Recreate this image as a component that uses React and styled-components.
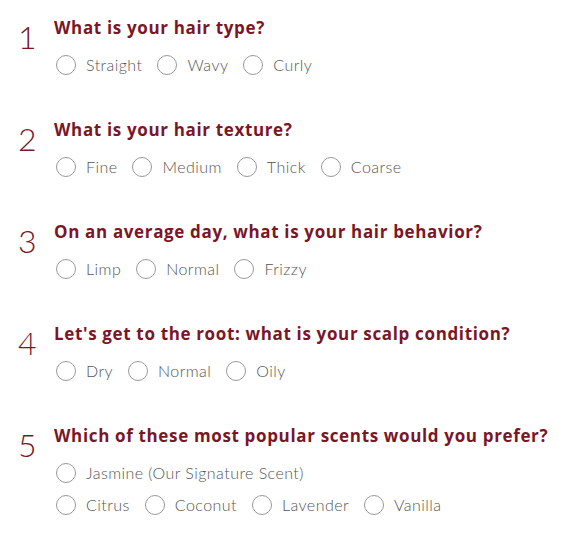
import React from 'react';
import styled, { createGlobalStyle } from 'styled-components';

const Global = createGlobalStyle`
  html, body {
    margin: 0;
    padding: 0;
    background: #fff;
  }
`;

const Page = styled.div`
  padding: 16px 0 0 0;
  display: flex;
  flex-direction: column;
  gap: 43px;
`;

const Question = styled.div`
  display: flex;
  align-items: flex-start;
`;

const Number = styled.div`
  width: 36px;
  padding-left: 18px;
  margin-top: 5px;
  font-family: Lato, sans-serif;
  font-weight: 300;
  font-size: 32px;
  line-height: 31px;
  color: #7b1626;
`;

const Body = styled.div`
  display: flex;
  flex-direction: column;
  gap: 12px;
`;

const Title = styled.div`
  font-family: "Open Sans", sans-serif;
  font-weight: 700;
  font-size: 17px;
  letter-spacing: 0.65px;
  line-height: 24px;
  color: #7b1626;
`;

const Options = styled.div`
  display: flex;
  flex-direction: column;
  gap: 12px;
  padding-top: 3px;
`;

const Row = styled.div`
  display: flex;
  align-items: center;
  gap: 13px;
`;

const Option = styled.label`
  display: flex;
  align-items: center;
  gap: 10px;
  font-family: Lato, sans-serif;
  font-weight: 300;
  font-size: 16px;
  letter-spacing: 0.45px;
  line-height: 20px;
  color: #555;
  cursor: pointer;
`;

const Radio = styled.span`
  width: 18px;
  height: 18px;
  border: 1px solid #9a9a9a;
  border-radius: 50%;
  background: #fff;
  margin-left: 2px;
`;

const questions = [
  { title: 'What is your hair type?', rows: [['Straight', 'Wavy', 'Curly']] },
  { title: 'What is your hair texture?', rows: [['Fine', 'Medium', 'Thick', 'Coarse']] },
  { title: 'On an average day, what is your hair behavior?', rows: [['Limp', 'Normal', 'Frizzy']] },
  { title: "Let's get to the root: what is your scalp condition?", rows: [['Dry', 'Normal', 'Oily']] },
  {
    title: 'Which of these most popular scents would you prefer?',
    rows: [['Jasmine (Our Signature Scent)'], ['Citrus', 'Coconut', 'Lavender', 'Vanilla']],
  },
];

export default function App() {
  return (
    <>
      <Global />
      <Page>
        {questions.map((q, i) => (
          <Question key={i}>
            <Number>{i + 1}</Number>
            <Body>
              <Title>{q.title}</Title>
              <Options>
                {q.rows.map((row, r) => (
                  <Row key={r}>
                    {row.map((opt) => (
                      <Option key={opt}>
                        <Radio />
                        {opt}
                      </Option>
                    ))}
                  </Row>
                ))}
              </Options>
            </Body>
          </Question>
        ))}
      </Page>
    </>
  );
}
